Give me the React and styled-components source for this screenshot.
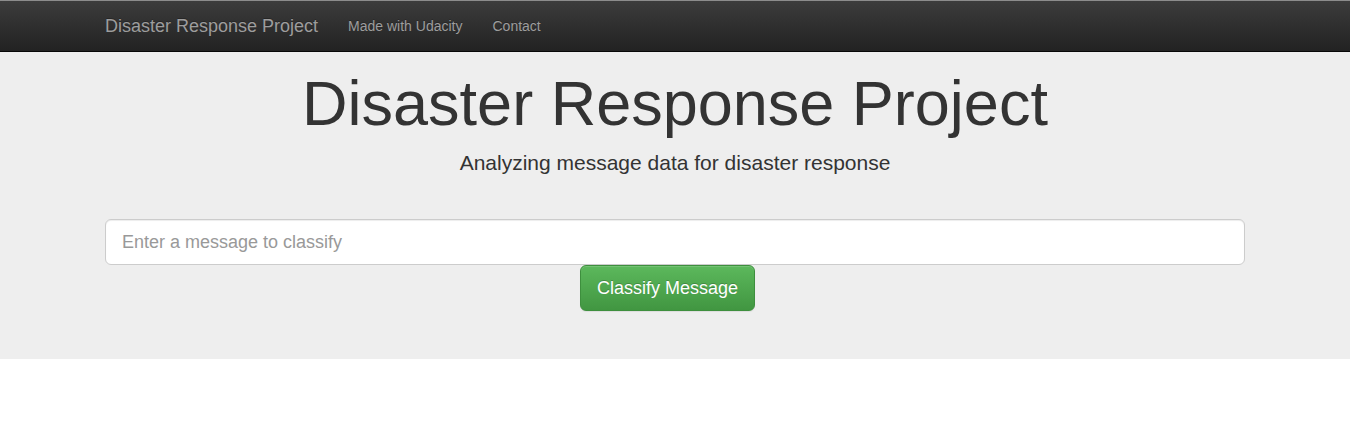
import React from "react";
import styled, { createGlobalStyle } from "styled-components";

const Global = createGlobalStyle`
  * { box-sizing: border-box; }
  html, body { margin: 0; padding: 0; background: #fff; }
  body {
    font-family: "Liberation Sans", Arial, Helvetica, sans-serif;
    font-size: 14px;
    line-height: 1.42857143;
    color: #333;
  }
`;

const Page = styled.div`
  border-top: 1px solid #8c8c8c;
`;

const Navbar = styled.nav`
  height: 51px;
  background-image: linear-gradient(to bottom, #3c3c3c 0, #222 100%);
  border-bottom: 1px solid #080808;
`;

const Container = styled.div`
  width: 1170px;
  margin: 0 auto;
  padding: 0 15px;
`;

const NavInner = styled(Container)`
  display: flex;
  align-items: stretch;
`;

const Brand = styled.a`
  display: block;
  margin-left: -15px;
  padding: 15px;
  font-size: 18px;
  line-height: 20px;
  height: 50px;
  color: #9d9d9d;
  text-decoration: none;
  text-shadow: 0 -1px 0 rgba(0, 0, 0, 0.25);
`;

const NavList = styled.ul`
  display: flex;
  list-style: none;
  margin: 0;
  padding: 0;
`;

const NavLink = styled.a`
  display: block;
  padding: 15px;
  line-height: 20px;
  font-size: 14px;
  color: #9d9d9d;
  text-decoration: none;
  text-shadow: 0 -1px 0 rgba(0, 0, 0, 0.25);
`;

const Jumbotron = styled.section`
  background: #eee;
  padding: 0 0 48px;
  display: flow-root;
`;

const Title = styled.h1`
  margin: 17px 0 10px;
  font-size: 63px;
  line-height: 1.1;
  font-weight: 500;
  text-align: center;
  color: inherit;
`;

const Lead = styled.p`
  margin: 0 0 15px;
  font-size: 21px;
  font-weight: 200;
  line-height: 30px;
  text-align: center;
`;

const Rule = styled.hr`
  margin: 20px 0;
  border: 0;
  border-top: 1px solid #eee;
`;

const Form = styled.form`
  margin: 0;
`;

const Input = styled.input`
  display: block;
  width: 100%;
  height: 46px;
  padding: 10px 16px;
  font-family: inherit;
  font-size: 18px;
  line-height: 1.3333333;
  color: #555;
  background: #fff;
  border: 1px solid #ccc;
  border-radius: 6px;
  box-shadow: inset 0 1px 1px rgba(0, 0, 0, 0.075);
  outline: none;
  &::placeholder { color: #999; opacity: 1; }
`;

const Offset = styled.div`
  margin-left: 41.66666667%;
`;

const Button = styled.button`
  display: inline-block;
  padding: 10px 16px;
  font-family: inherit;
  font-size: 18px;
  line-height: 1.3333333;
  color: #fff;
  border: 1px solid #3e8f3e;
  border-radius: 6px;
  background-image: linear-gradient(to bottom, #5cb85c 0, #419641 100%);
  text-shadow: 0 -1px 0 rgba(0, 0, 0, 0.2);
  box-shadow: inset 0 1px 0 rgba(255, 255, 255, 0.15), 0 1px 1px rgba(0, 0, 0, 0.075);
  cursor: pointer;
`;

export default function App() {
  return (
    <Page>
      <Global />
      <Navbar>
        <NavInner>
          <Brand href="#">Disaster Response Project</Brand>
          <NavList>
            <li><NavLink href="#">Made with Udacity</NavLink></li>
            <li><NavLink href="#">Contact</NavLink></li>
          </NavList>
        </NavInner>
      </Navbar>
      <Jumbotron>
        <Container>
          <Title>Disaster Response Project</Title>
          <Lead>Analyzing message data for disaster response</Lead>
          <Rule />
          <Form onSubmit={(e) => e.preventDefault()}>
            <Input type="text" name="query" placeholder="Enter a message to classify" />
            <Offset>
              <Button type="submit">Classify Message</Button>
            </Offset>
          </Form>
        </Container>
      </Jumbotron>
    </Page>
  );
}
